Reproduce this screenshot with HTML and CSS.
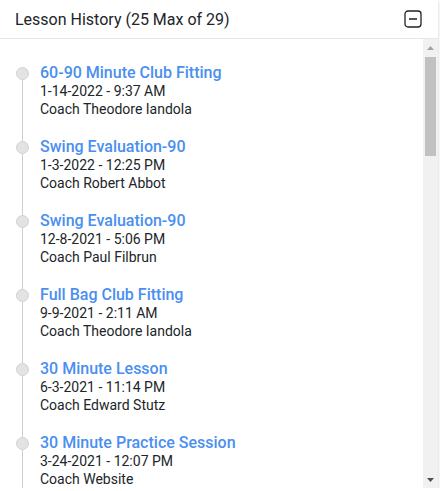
FILE: index.html
```html
<!DOCTYPE html>
<html>
<head>
<meta charset="utf-8">
<link rel="stylesheet" href="styles.css">
</head>
<body>
<div class="card">
  <div class="card-header">
    <span class="card-title">Lesson History (25 Max of 29)</span>
    <svg class="collapse-icon" width="18" height="18" viewBox="0 0 18 18">
      <rect x="1" y="1" width="16" height="16" rx="3" ry="3" fill="none" stroke="#222" stroke-width="1.3"/>
      <line x1="5" y1="9" x2="13" y2="9" stroke="#444" stroke-width="1.8"/>
    </svg>
  </div>
  <div class="card-body">
    <ul class="timeline">
      <li class="entry"><div class="entry-title">60-90 Minute Club Fitting</div><div class="entry-line">1-14-2022 - 9:37 AM</div><div class="entry-line">Coach Theodore Iandola</div></li>
      <li class="entry"><div class="entry-title">Swing Evaluation-90</div><div class="entry-line">1-3-2022 - 12:25 PM</div><div class="entry-line">Coach Robert Abbot</div></li>
      <li class="entry"><div class="entry-title">Swing Evaluation-90</div><div class="entry-line">12-8-2021 - 5:06 PM</div><div class="entry-line">Coach Paul Filbrun</div></li>
      <li class="entry"><div class="entry-title">Full Bag Club Fitting</div><div class="entry-line">9-9-2021 - 2:11 AM</div><div class="entry-line">Coach Theodore Iandola</div></li>
      <li class="entry"><div class="entry-title">30 Minute Lesson</div><div class="entry-line">6-3-2021 - 11:14 PM</div><div class="entry-line">Coach Edward Stutz</div></li>
      <li class="entry"><div class="entry-title">30 Minute Practice Session</div><div class="entry-line">3-24-2021 - 12:07 PM</div><div class="entry-line">Coach Website</div></li>
    </ul>
    <div class="scrollbar">
      <div class="scroll-btn">
        <svg width="7" height="4" viewBox="0 0 7 4"><polygon points="3.5,0 7,4 0,4" fill="#a3a3a3"/></svg>
      </div>
      <div class="scroll-track">
        <div class="scroll-thumb"></div>
      </div>
      <div class="scroll-btn">
        <svg width="7" height="4" viewBox="0 0 7 4"><polygon points="0,0 7,0 3.5,4" fill="#505050"/></svg>
      </div>
    </div>
  </div>
</div>
</body>
</html>
```

FILE: styles.css
```css
html, body {
  margin: 0;
  padding: 0;
  background: #ffffff;
}

body {
  font-family: Roboto, "Liberation Sans", Arial, sans-serif;
  color: #212529;
}

.card {
  width: 438px;
  height: 488px;
  display: flex;
  flex-direction: column;
  background: #fff;
  box-shadow: 0 1px 3px rgba(0, 0, 0, 0.22);
}

.card-header {
  height: 38px;
  flex: 0 0 38px;
  display: flex;
  align-items: center;
  justify-content: space-between;
  padding: 0 16px 0 15px;
  border-bottom: 1px solid #e6e6e6;
}

.card-title {
  font-size: 16px;
  font-weight: 400;
  color: #212529;
}

.collapse-icon {
  display: block;
}

.card-body {
  flex: 1 1 auto;
  min-height: 0;
  display: flex;
}

.timeline {
  flex: 1 1 auto;
  min-width: 0;
  list-style: none;
  margin: 0;
  padding: 25px 0 0 0;
  overflow: hidden;
}

.scrollbar {
  flex: 0 0 15px;
  display: flex;
  flex-direction: column;
  background: #f1f1f1;
}

.scroll-btn {
  flex: 0 0 17px;
  display: flex;
  align-items: center;
  justify-content: center;
}

.scroll-btn svg {
  display: block;
}

.scroll-track {
  flex: 1 1 auto;
}

.scroll-thumb {
  margin: 1px 2px 0 2px;
  height: 99px;
  background: #c1c1c1;
}

.entry {
  position: relative;
  padding: 0 0 20px 40px;
}

.entry::before {
  content: "";
  position: absolute;
  left: 22px;
  top: 0;
  bottom: 0;
  width: 1px;
  background: #cfcfcf;
}

.entry:first-child::before {
  top: 8px;
}

.entry::after {
  content: "";
  position: absolute;
  left: 16px;
  top: 3px;
  width: 11px;
  height: 11px;
  border-radius: 50%;
  background: #e3e3e3;
  border: 1px solid #d2d2d2;
}

.entry-title {
  font-size: 16px;
  font-weight: 500;
  line-height: 18px;
  color: #4a8ff0;
}

.entry-line {
  font-size: 14px;
  line-height: 18px;
  color: #212529;
}
```
